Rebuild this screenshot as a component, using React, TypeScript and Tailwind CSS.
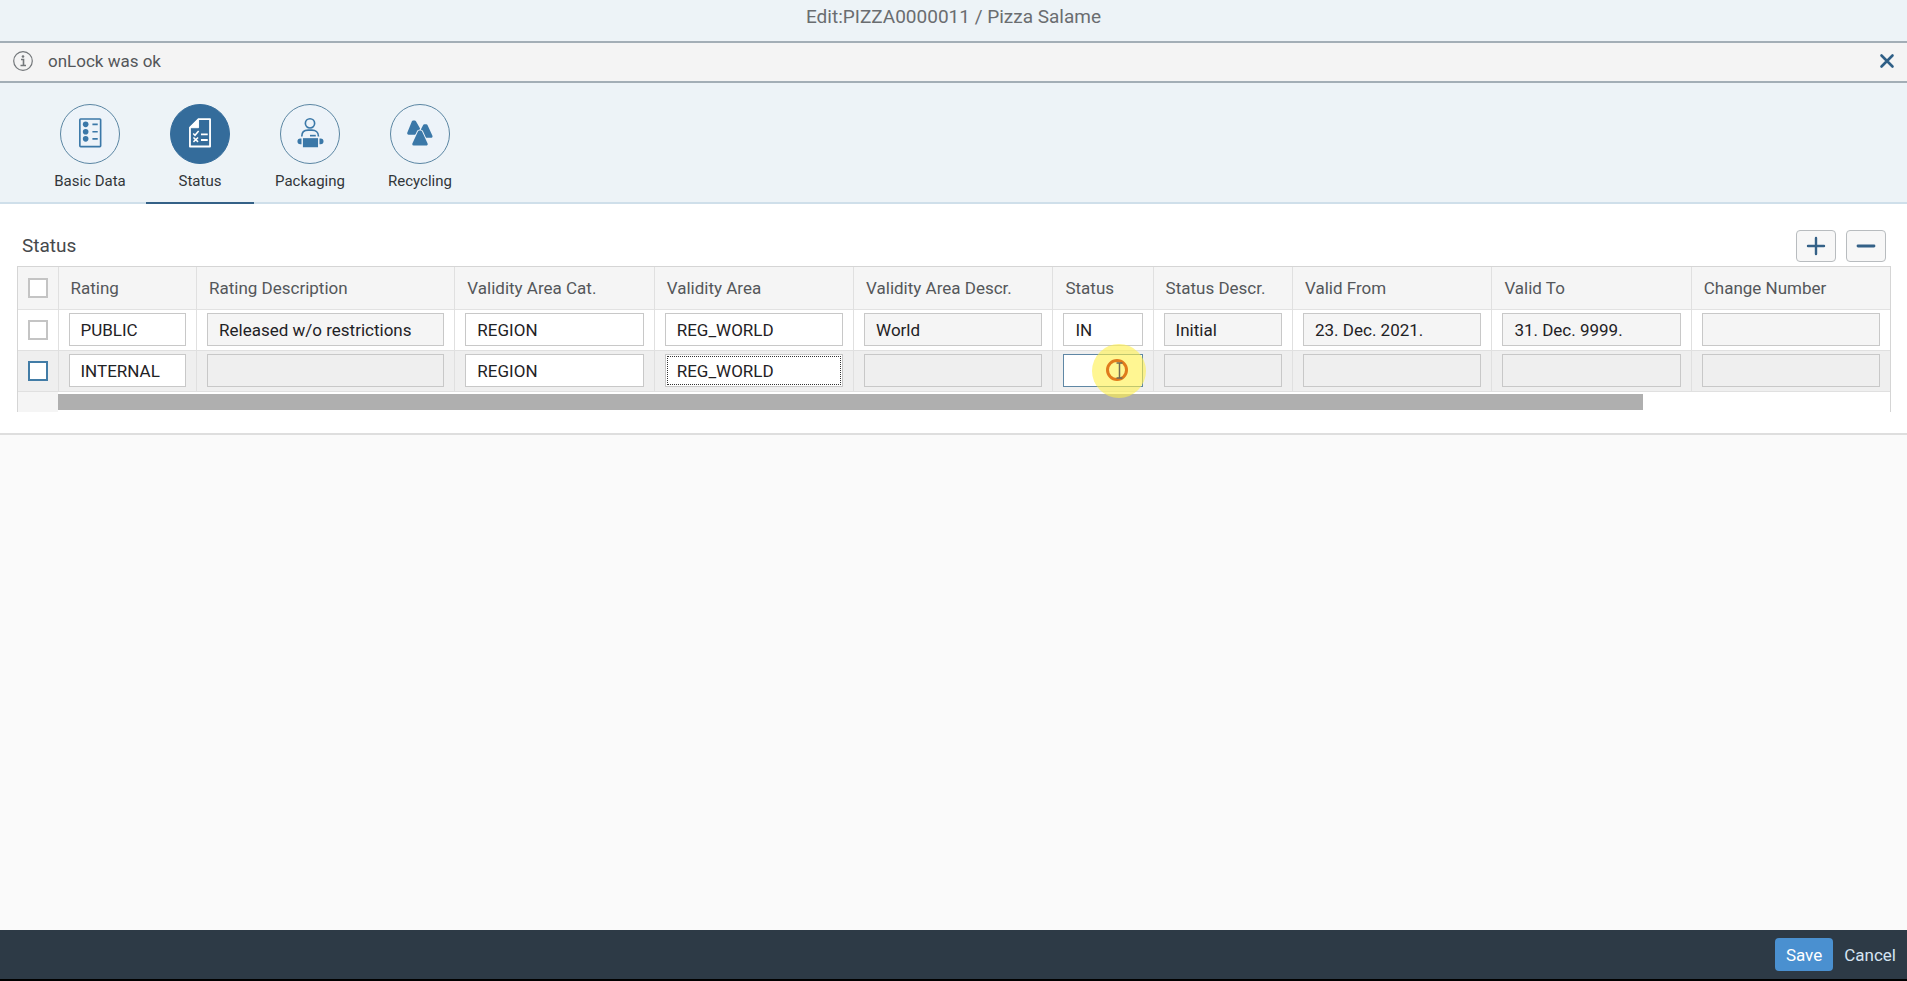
import { useState } from 'react'
import type { ReactNode } from 'react'

interface Column {
    label: string;
    width: string;
    editable: boolean;
}

const columns: Column[] = [
    { label: 'Rating', width: 'w-[7.4%]', editable: true },
    { label: 'Rating Description', width: 'w-[13.8%]', editable: false },
    { label: 'Validity Area Cat.', width: 'w-[10.65%]', editable: true },
    { label: 'Validity Area', width: 'w-[10.65%]', editable: true },
    { label: 'Validity Area Descr.', width: 'w-[10.65%]', editable: false },
    { label: 'Status', width: 'w-[5.35%]', editable: true },
    { label: 'Status Descr.', width: 'w-[7.45%]', editable: false },
    { label: 'Valid From', width: 'w-[10.65%]', editable: false },
    { label: 'Valid To', width: 'w-[10.65%]', editable: false },
    { label: 'Change Number', width: '', editable: false },
]

const rows: string[][] = [
    ['PUBLIC', 'Released w/o restrictions', 'REGION', 'REG_WORLD', 'World', 'IN', 'Initial', '23. Dec. 2021.', '31. Dec. 9999.', ''],
    ['INTERNAL', '', 'REGION', 'REG_WORLD', '', '', '', '', '', ''],
]

const BasicDataIcon = () => (
    <svg viewBox="0 0 60 60" className="size-full" fill="none" stroke="currentColor" strokeWidth="1.7">
        <rect x="19.5" y="14.5" width="21.5" height="28.5" rx="0.8" />
        <g fill="currentColor" stroke="none">
            <circle cx="25.5" cy="20" r="2.9" />
            <circle cx="25.5" cy="27.7" r="2.9" />
            <circle cx="25.5" cy="35" r="2.9" />
        </g>
        <path d="M32.5 20h5.5M32.5 27.7h5.5M32.5 35h5.5" />
    </svg>
)

const StatusIcon = () => (
    <svg viewBox="0 0 60 60" className="size-full" fill="none" stroke="currentColor" strokeWidth="1.9">
        <path d="M28.5 14.6H40.4V42.9H19.6V23.5Z" strokeLinejoin="round" />
        <path d="M28.5 14.6V23.5H19.6Z" fill="currentColor" strokeWidth="1" />
        <path d="M23 29.5l1.8 1.8 3.8-4.4M23.2 33.6l4.8 4.6M28 33.6l-4.8 4.6" strokeWidth="1.6" />
        <path d="M31 30.4h7M31 36.2h7" />
    </svg>
)

const PackagingIcon = () => (
    <svg viewBox="0 0 60 60" className="size-full" fill="none" stroke="currentColor" strokeWidth="1.7">
        <circle cx="30" cy="19" r="4.8" />
        <path d="M21.5 32.5C21.5 28 24.5 26 28 26H32C35.5 26 38.8 28 38.8 32.5" />
        <path d="M30 31.7h6" />
        <g fill="currentColor" stroke="none">
            <rect x="22.7" y="34.3" width="15.6" height="9.4" />
            <path d="M21.2 34.6V40.6H20A3 3 0 0 1 20 34.6ZM39.8 34.6V40.6H41A3 3 0 0 0 41 34.6Z" />
        </g>
    </svg>
)

const RecyclingIcon = () => (
    <svg viewBox="0 0 60 60" className="size-full" fill="currentColor" stroke="currentColor" strokeWidth="3" strokeLinejoin="round">
        <path d="M23 17.5H24.5L28.5 24.5L24.5 29.2H18.2Z" />
        <path d="M34.5 21.5H36.500L41.500 32.500H36L32.500 25.500Z" />
        <path d="M29.2 28H30.8L36.500 40.500H23.500Z" stroke="#edf3f9" strokeWidth="5" />
        <path d="M29.2 28H30.8L36.500 40.500H23.500Z" />
    </svg>
)

interface TabItem {
    name: string;
    icon: ReactNode;
}

const tabs: TabItem[] = [
    { name: 'Basic Data', icon: <BasicDataIcon /> },
    { name: 'Status', icon: <StatusIcon /> },
    { name: 'Packaging', icon: <PackagingIcon /> },
    { name: 'Recycling', icon: <RecyclingIcon /> },
]

interface TabsProps {
    tab: string;
    setTab: (tab: string) => void;
}

const IconTabs = ({ tab, setTab }: TabsProps) => (
    <nav className="flex gap-0.5 border-b-2 border-[#cfdfea] bg-[#edf3f7] pl-9">
        {tabs.map((t) => (
            <button key={t.name} onClick={() => setTab(t.name)} className={`-mb-0.5 flex h-[121px] w-[108px] flex-col items-center border-b-2 pt-[21px] text-[15px] leading-5 text-[#32363a] ${tab === t.name ? 'border-[#346187]' : 'border-transparent'}`}>
                <span className={`mb-[7px] size-[60px] rounded-full border ${tab === t.name ? 'border-[#346c9b] bg-[#346c9b] text-white' : 'border-[#5b86a3] bg-[#edf3f9] text-[#3b78a8]'}`}>{t.icon}</span>
                {t.name}
            </button>
        ))}
    </nav>
)

const CheckBox = ({ label, active }: { label: string; active?: boolean }) => (
    <input type="checkbox" aria-label={label} className={`block size-5 appearance-none border-2 bg-white checked:bg-[#346187] ${active ? 'border-[#427ca6]' : 'border-[#c4c4c4]'}`} />
)

const ClickMarker = () => (
    <svg viewBox="0 0 56 56" className="pointer-events-none absolute -top-2 right-1.5 size-14">
        <circle cx="28" cy="28" r="27" fill="#fff04a" fillOpacity="0.6" />
        <circle cx="26" cy="27" r="9.5" fill="none" stroke="#e07b1c" strokeWidth="3" />
        <path d="M25.5 20H31.5M28.5 20V35M25.5 35H31.5" fill="none" stroke="#6f6a55" strokeWidth="1.5" />
    </svg>
)

const StatusTable = () => (
    <div className="mr-4 ml-[17px] border-x border-t border-[#d5d5d5]">
        <table className="w-full table-fixed border-collapse text-left">
            <thead>
                <tr className="h-[42px] border-b border-[#e2e2e2] bg-[#f5f5f5]">
                    <th className="w-10 border-r border-[#e0e0e0] pl-2.5"><CheckBox label="Select all rows" /></th>
                    {columns.map((c) => (
                        <th key={c.label} className={`truncate border-r border-[#e0e0e0] pl-3 font-normal text-[#54575a] last:border-r-0 ${c.width}`}>{c.label}</th>
                    ))}
                </tr>
            </thead>
            <tbody>
                {rows.map((row, r) => (
                    <tr key={r} className={`h-[41px] border-b border-[#e0e0e0] ${r === 1 ? 'bg-[#efefef]' : 'bg-white'}`}>
                        <td className="border-r border-[#e0e0e0] pl-2.5"><CheckBox label={`Select row ${r + 1}`} active={r === 1} /></td>
                        {row.map((value, i) => {
                            const marked = r === 1 && i === 5
                            const focused = r === 1 && i === 3
                            return (
                                <td key={i} className="relative border-r border-[#e0e0e0] px-2.5 last:border-r-0">
                                    <input
                                        aria-label={`${columns[i].label} row ${r + 1}`}
                                        defaultValue={value}
                                        readOnly={!columns[i].editable}
                                        className={`block h-[33px] w-full border px-[11px] text-[#1f2225] ${columns[i].editable ? 'bg-white' : r === 1 ? 'bg-[#efefef]' : 'bg-[#f5f5f5]'} ${marked ? 'border-[#5f87a5]' : 'border-[#c8c8c8]'} ${focused ? 'outline-1 -outline-offset-3 outline-[#333] outline-dotted' : 'outline-none'}`}
                                    />
                                    {marked && <ClickMarker />}
                                </td>
                            )
                        })}
                    </tr>
                ))}
            </tbody>
        </table>
        <div className="flex h-5">
            <div className="w-10 bg-[#f5f5f5]" />
            <div className="flex-1 pt-0.5">
                <div className="h-4 w-[86.5%] bg-[#afafaf]" />
            </div>
        </div>
    </div>
)

const toolButton = 'flex h-8 w-10 items-center justify-center rounded border border-[#b8bcbf] bg-[#f7f7f7] text-[#346187]'

export default function App() {
    const [tab, setTab] = useState('Status')
    const [message, setMessage] = useState(true)

    return (
        <div className="flex min-h-screen flex-col bg-[#fafafa] font-['Roboto',sans-serif] text-[17px] leading-6">
            <header className="h-[41px] bg-[#edf3f7] pt-[5px] text-center">
                <h1 className="text-[19px] leading-6 text-[#6a6d70]">Edit:PIZZA0000011 / Pizza Salame</h1>
            </header>
            {message && (
                <div className="flex h-[42px] items-center border-y-2 border-[#a3aeb6] bg-[#f4f4f4] pr-3 pb-0.5 pl-[13px] text-[#54575a]">
                    <svg viewBox="0 0 20 20" className="mr-[15px] size-5" fill="none" stroke="#73777a" strokeWidth="1.2">
                        <circle cx="10" cy="10" r="9.3" />
                        <path d="M8 8.5H10.5V14.5M7.5 14.5H13" strokeWidth="1.6" />
                        <circle cx="10" cy="5.5" r="1.3" fill="#73777a" stroke="none" />
                    </svg>
                    <span className="flex-1">onLock was ok</span>
                    <button aria-label="Close message" onClick={() => setMessage(false)}>
                        <svg viewBox="0 0 16 16" className="size-4" stroke="#2f5f86" strokeWidth="2.6" strokeLinecap="round">
                            <path d="M2.5 2.5l11 11M13.5 2.5l-11 11" />
                        </svg>
                    </button>
                </div>
            )}
            <IconTabs tab={tab} setTab={setTab} />
            <section className="border-b-2 border-[#dedede] bg-white pt-[26px] pb-[21px]">
                <div className="mb-1 flex items-center gap-2.5 pr-[21px] pl-[22px]">
                    <h2 className="flex-1 text-[19px] text-[#45484b]">Status</h2>
                    <button className={toolButton} aria-label="Add row">
                        <svg viewBox="0 0 20 20" className="size-5" stroke="currentColor" strokeWidth="2.4" strokeLinecap="round"><path d="M2 10H18M10 2V18" /></svg>
                    </button>
                    <button className={toolButton} aria-label="Remove row">
                        <svg viewBox="0 0 20 20" className="size-5" stroke="currentColor" strokeWidth="2.8" strokeLinecap="round"><path d="M2 10H18" /></svg>
                    </button>
                </div>
                <StatusTable />
            </section>
            <footer className="mt-auto flex h-[51px] items-center justify-end gap-[11px] border-b-2 border-black bg-[#2d3a46] pr-[11px]">
                <button className="h-[33px] rounded bg-[#4a90d0] px-[11px] text-white">Save</button>
                <button className="text-[#d5e4f2]">Cancel</button>
            </footer>
        </div>
    )
}
